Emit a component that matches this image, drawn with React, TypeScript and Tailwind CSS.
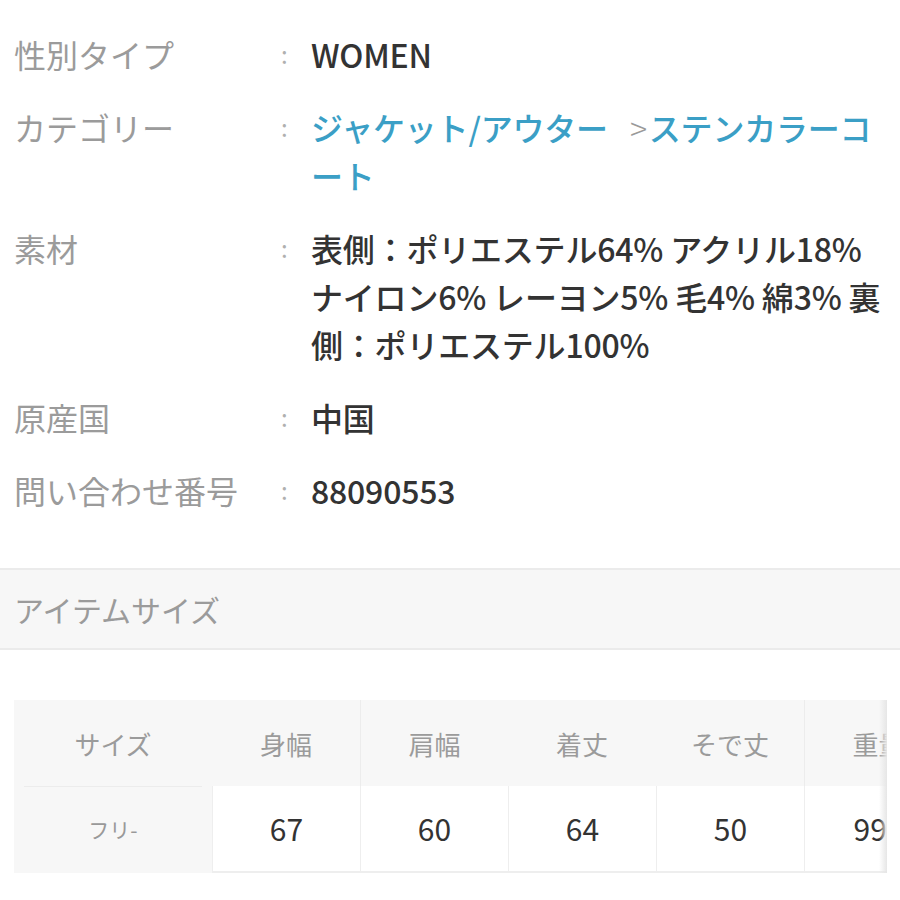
const font = "font-['Noto_Sans_CJK_JP','Noto_Sans',sans-serif]";

type Row = { label: string; lines: React.ReactNode[] };

const rows: Row[] = [
  { label: "性別タイプ", lines: ["WOMEN"] },
  {
    label: "カテゴリー",
    lines: [
      <>
        <span className="text-[#3b9fc6]">ジャケット/アウター</span>
        <span className="ml-[22px] mr-[2px] font-light text-[#9a9a9a]">&gt;</span>
        <span className="text-[#3b9fc6]">ステンカラーコ</span>
      </>,
      <span className="text-[#3b9fc6]">ート</span>,
    ],
  },
  {
    label: "素材",
    lines: [
      "表側：ポリエステル64% アクリル18%",
      "ナイロン6% レーヨン5% 毛4% 綿3% 裏",
      "側：ポリエステル100%",
    ],
  },
  { label: "原産国", lines: ["中国"] },
  { label: "問い合わせ番号", lines: ["88090553"] },
];

const sizes = [
  { head: "身幅", value: "67", line: false },
  { head: "肩幅", value: "60", line: true },
  { head: "着丈", value: "64", line: false },
  { head: "そで丈", value: "50", line: false },
  { head: "重量", value: "990", line: true },
];

function SpecRow({ label, lines }: Row) {
  return (
    <div className="flex text-[32px] leading-[48px]">
      <div className="w-[267px] shrink-0 text-[#9b9b9b]">{label}</div>
      <div className="w-[30px] shrink-0 text-[24px] text-[#b0b0b0]">:</div>
      <div className="flex flex-col font-medium tracking-[-0.2px] text-[#333]">
        {lines.map((line, i) => (
          <div key={i} className="whitespace-nowrap">
            {line}
          </div>
        ))}
      </div>
    </div>
  );
}

export default function App() {
  return (
    <div className={`h-[900px] w-[900px] overflow-hidden bg-white ${font}`}>
      <div className="flex flex-col gap-[25px] pl-[14px] pt-[30px]">
        {rows.map((r) => (
          <SpecRow key={r.label} {...r} />
        ))}
      </div>

      <div className="mt-[54px] flex h-[82px] items-center border-y-2 border-[#ebebeb] bg-[#f7f7f7] pl-[14px] text-[30px] text-[#9b9b9b]">
        アイテムサイズ
      </div>

      <div className="relative ml-[14px] mt-[50px] w-[873px] overflow-hidden">
        <div className="flex w-max">
          <div className="flex w-[198px] flex-col bg-[#f7f7f7]">
            <div className="flex h-[86px] items-center justify-center text-[26px] text-[#9b9b9b]">
              サイズ
            </div>
            <div className="mx-[10px] flex h-[87px] items-center justify-center border-t border-[#ececec] text-[21px] text-[#999]">
              フリ-
            </div>
          </div>
          {sizes.map((s) => (
            <div key={s.head} className="flex w-[148px] flex-col">
              <div
                className={`flex h-[86px] items-center justify-center bg-[#f7f7f7] text-[26px] text-[#9b9b9b] ${
                  s.line ? "border-l border-[#ececec]" : ""
                }`}
              >
                {s.head}
              </div>
              <div className="flex h-[87px] items-center justify-center border-b-2 border-l border-[#eeeeee] bg-white text-[30px] text-[#333]">
                {s.value}
              </div>
            </div>
          ))}
        </div>
        <div className="absolute right-0 top-0 h-full w-[8px] bg-gradient-to-r from-transparent to-[#e6e6e6]" />
      </div>
    </div>
  );
}
